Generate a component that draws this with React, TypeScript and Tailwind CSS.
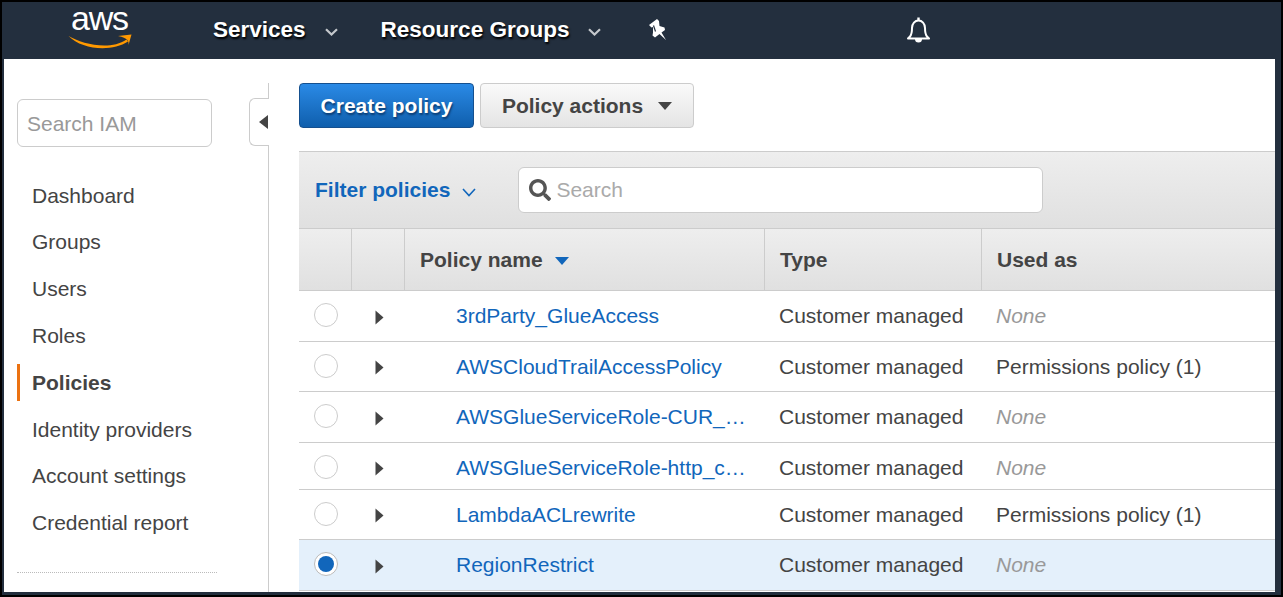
import { FaSearch } from "react-icons/fa";

const menu = [
  "Dashboard",
  "Groups",
  "Users",
  "Roles",
  "Policies",
  "Identity providers",
  "Account settings",
  "Credential report",
];

const policies = [
  { name: "3rdParty_GlueAccess", used: "", height: "h-[51px]" },
  { name: "AWSCloudTrailAccessPolicy", used: "Permissions policy (1)", height: "h-[50px]" },
  { name: "AWSGlueServiceRole-CUR_…", used: "", height: "h-[51px]" },
  { name: "AWSGlueServiceRole-http_c…", used: "", height: "h-[47px]", lower: true },
  { name: "LambdaACLrewrite", used: "Permissions policy (1)", height: "h-[50px]" },
  { name: "RegionRestrict", used: "", height: "h-[51px]", selected: true },
];

const NavChevron = () => (
  <svg width="13" height="8" viewBox="0 0 13 8" className="mt-[3px]">
    <path d="M1 1.2 6.5 6.5 12 1.2" fill="none" stroke="#c4c8cc" strokeWidth="2.2" />
  </svg>
);

const Caret = () => (
  <svg width="9" height="15" viewBox="0 0 9 15">
    <path d="M0.5 0.5 8.5 7.5 0.5 14.5Z" fill="#444" />
  </svg>
);

const PinIcon = () => (
  <svg width="18" height="21" viewBox="0 0 18 21">
    <path
      d="M9 0 1 6 3.500 8.500 5 8 5 13.500 4.500 16.500 7 18.500 11.500 15 18 21 13.500 13.500 17 11 16.500 8.500 11.500 7 11 2Z"
      fill="#fff"
    />
    <path d="M5.500 6.500 7.500 12.500" stroke="#232f3e" strokeWidth="1.200" />
  </svg>
);

const BellIcon = () => (
  <svg width="23" height="26" viewBox="0 0 23 26">
    <path
      d="M11.500 3.500C15 3.500 18 6.500 18 11C18 15 18 17 20 19.500L22 21.500H1L3 19.500C5 17 5 15 5 11C5 6.500 8 3.500 11.500 3.500Z"
      fill="none"
      stroke="#fff"
      strokeWidth="2"
      strokeLinejoin="round"
    />
    <path d="M11.500 0.500V3.500" stroke="#fff" strokeWidth="2.400" />
    <path d="M8 22A3.500 3.500 0 0 0 15 22Z" fill="#fff" />
  </svg>
);

export default function App() {
  return (
    <div className="w-[1283px] h-[597px] bg-black p-[2px] overflow-hidden font-['Liberation_Sans',Arial,sans-serif] text-[#444]">
      <div className="w-[1279px] h-[593px] bg-[#232f3e] flex flex-col">
        <header className="h-[57px] shrink-0 flex items-center text-white font-bold text-[22.500px] [text-shadow:1px_2px_2px_#000]">
          <div className="relative w-[60px] h-[46px] ml-[66px] mr-[85px]">
            <span className="absolute left-[3px] -top-[7px] font-normal text-[34px] leading-[34px] tracking-[-1.2px] [text-shadow:none]">
              aws
            </span>
            <svg width="64" height="15" viewBox="0 0 64 15" className="absolute left-0 top-[26px]">
              <path d="M0.500 2C14 10 42 17 58.500 5.500L60 7.500C44 18 14 16 0.500 2Z" fill="#f90" />
              <path d="M50 2 63.500 0.500 60.500 11C61 7 60 4 50 2Z" fill="#f90" />
            </svg>
          </div>
          <span className="-mt-[2px]">Services</span>
          <span className="ml-[19px] mr-[43px]"><NavChevron /></span>
          <span className="-mt-[2px]">Resource Groups</span>
          <span className="ml-[19px] mr-[47px]"><NavChevron /></span>
          <span className="-mt-[2px]"><PinIcon /></span>
          <span className="ml-[241px] -mt-[2px]"><BellIcon /></span>
        </header>

        <div className="flex-1 flex ml-[2px] mr-[6px] mb-[3px] bg-white overflow-hidden">
          <aside className="w-[264px] shrink-0 pl-[13px] pt-[40px]">
            <input
              placeholder="Search IAM"
              className="w-[195px] h-[48px] px-[9px] pt-[2px] border border-[#ccc] rounded-[6px] text-[21px] placeholder:text-[#999]"
            />
            <nav className="mt-[25px] text-[21px]">
              {menu.map((item) =>
                item === "Policies" ? (
                  <div key={item} className="h-[46.800px] flex items-center">
                    <span className="w-[15px] h-[37px] border-l-[3px] border-[#ec7211]" />
                    <span className="font-bold">{item}</span>
                  </div>
                ) : (
                  <div key={item} className="h-[46.800px] flex items-center pl-[15px]">
                    {item}
                  </div>
                )
              )}
            </nav>
            <div className="mt-[26px] w-[200px] border-t border-dotted border-[#bbb]" />
          </aside>

          <div className="relative w-px mt-[24px] bg-[#ccc] shrink-0">
            <div className="absolute -left-[19px] top-[15px] w-[20px] h-[48px] bg-white border border-r-0 border-[#ccc] rounded-l-[6px] flex items-center justify-center pl-[8px]">
              <svg width="10" height="14" viewBox="0 0 10 14">
                <path d="M9 0V14L0 7Z" fill="#444" />
              </svg>
            </div>
          </div>

          <main className="flex-1 min-w-0 pl-[30px] pt-[24px]">
            <div className="flex gap-[6px] text-[21px] font-bold">
              <button className="w-[175px] h-[45px] rounded-[4px] border border-[#15508f] bg-gradient-to-b from-[#2a8ae6] to-[#0f5fad] text-white [text-shadow:1px_2px_2px_#0a3b70]">
                Create policy
              </button>
              <button className="w-[214px] h-[45px] rounded-[4px] border border-[#ccc] bg-gradient-to-b from-[#fafafa] to-[#e4e4e4] flex items-center justify-center gap-[15px]">
                Policy actions
                <svg width="14" height="8" viewBox="0 0 14 8">
                  <path d="M0 0H14L7 8Z" fill="#444" />
                </svg>
              </button>
            </div>

            <div className="mt-[23px] h-[77px] flex items-center border-t border-[#ccc] bg-gradient-to-b from-[#eeeeee] to-[#e0e0e0] pl-[16px]">
              <span className="text-[21px] font-bold text-[#1166bb]">Filter policies</span>
              <svg width="14" height="9" viewBox="0 0 14 9" className="ml-[12px] mt-[4px]">
                <path d="M1 1 7 7.500 13 1" fill="none" stroke="#1166bb" strokeWidth="1.600" />
              </svg>
              <div className="ml-[42px] w-[525px] h-[46px] bg-white border border-[#ccc] rounded-[6px] flex items-center pl-[10px] text-[21px] text-[#aaa]">
                <FaSearch className="text-[#555] text-[22px] mr-[5px]" />
                Search
              </div>
            </div>

            <div className="grid grid-cols-[53px_53px_360px_217px_1fr] h-[63px] border-y border-[#ccc] bg-gradient-to-b from-[#eeeeee] to-[#e0e0e0] text-[21px] font-bold">
              <div className="border-r border-[#ccc]" />
              <div className="border-r border-[#ccc]" />
              <div className="border-r border-[#ccc] flex items-center pl-[15px]">
                Policy name
                <svg width="14" height="8" viewBox="0 0 14 8" className="ml-[12px] mt-[3px]">
                  <path d="M0 0H14L7 8Z" fill="#1166bb" />
                </svg>
              </div>
              <div className="border-r border-[#ccc] flex items-center pl-[15px]">Type</div>
              <div className="flex items-center pl-[15px]">Used as</div>
            </div>

            {policies.map((row) => (
              <div
                key={row.name}
                className={`grid grid-cols-[53px_53px_360px_217px_1fr] ${row.height} border-b border-[#ccc] text-[21px] items-center ${
                  row.selected ? "bg-[#e4f0fb]" : "bg-white"
                } ${row.lower ? "pt-[3px]" : ""}`}
              >
                <div className="pl-[15px] -mt-[2px]">
                  {row.selected ? (
                    <div className="w-[24px] h-[24px] rounded-full border border-[#bbb] bg-white flex items-center justify-center">
                      <div className="w-[16px] h-[16px] rounded-full bg-[#1166bb]" />
                    </div>
                  ) : (
                    <div className="w-[24px] h-[24px] rounded-full border border-[#ccc] bg-white" />
                  )}
                </div>
                <div className="pl-[23px] pt-[2px] flex items-center">
                  <Caret />
                </div>
                <div className="pl-[51px] whitespace-nowrap text-[#1166bb]">{row.name}</div>
                <div className="pl-[14px]">Customer managed</div>
                <div className="pl-[14px]">
                  {row.used || <span className="italic text-[#999]">None</span>}
                </div>
              </div>
            ))}
          </main>
        </div>
      </div>
    </div>
  );
}
